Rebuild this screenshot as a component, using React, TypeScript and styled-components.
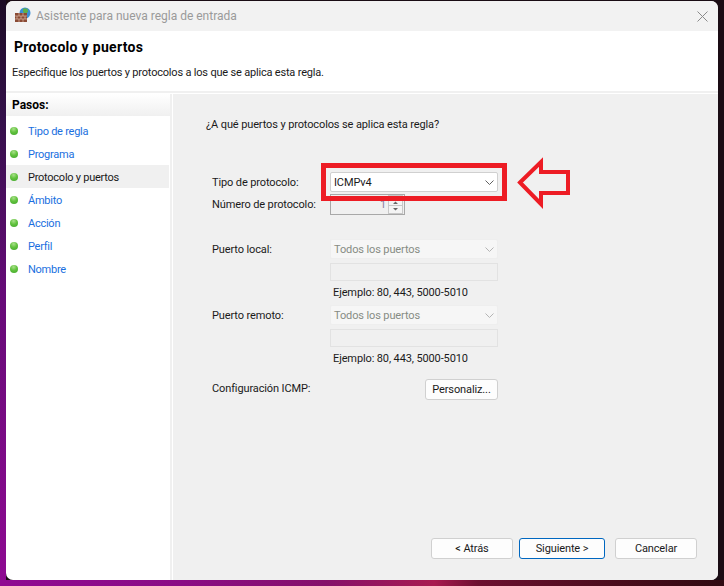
import React from "react";
import styled, { createGlobalStyle } from "styled-components";

const GlobalStyle = createGlobalStyle`
  html, body { margin: 0; padding: 0; width: 724px; height: 586px; overflow: hidden; }
  body { font-family: Roboto, "Liberation Sans", Arial, sans-serif; }
  * { box-sizing: border-box; }
`;

const steps = ["Tipo de regla", "Programa", "Protocolo y puertos", "Ámbito", "Acción", "Perfil", "Nombre"];

const Desktop = styled.div`
  width: 724px;
  height: 586px;
  padding: 1px 6px 6px;
  background:
    linear-gradient(90deg, #8f0a92 0, #8a0c85 25%, #85106a 45%, #a81a50 60%, #6c1030 66%, #4a0c1c 85%, #300a12 100%) bottom / 100% 6px no-repeat,
    linear-gradient(180deg, #1c0c24 0, #34104a 20%, #660b78 50%, #8f0a92 100%) left / 6px 100% no-repeat,
    #1a0c14;
`;

const Window = styled.div`
  width: 712px;
  height: 579px;
  display: flex;
  flex-direction: column;
  background: #fff;
  border-radius: 7px;
  overflow: hidden;
`;

const TitleBar = styled.div`
  height: 30px;
  flex: none;
  display: flex;
  align-items: center;
  padding: 0 8px 0 9px;
  background: #f2f2f2;
`;

const AppIcon = styled.svg`
  width: 16px;
  height: 16px;
  margin-bottom: 2px;
  flex: none;
`;

const TitleText = styled.span`
  margin-left: 5px;
  font-size: 12px;
  color: #9a9a9a;
`;

const CloseIcon = styled.svg`
  margin-left: auto;
  margin-right: 2px;
  width: 11px;
  height: 11px;
`;

const Header = styled.div`
  height: 62px;
  flex: none;
  padding: 8px 0 0 6px;
  border-bottom: 2px solid #f0f0f0;
`;

const HeaderTitle = styled.div`
  margin-left: 2px;
  font-size: 14px;
  font-weight: bold;
  letter-spacing: 0.3px;
  color: #000;
  line-height: 16px;
`;

const HeaderSub = styled.div`
  margin-top: 11px;
  font-size: 11px;
  letter-spacing: -0.19px;
  color: #1a1a1a;
  line-height: 14px;
`;

const Body = styled.div`
  flex: 1;
  display: flex;
  min-height: 0;
  padding-top: 1px;
`;

const Sidebar = styled.div`
  width: 166px;
  flex: none;
  border-right: 2px solid #f0f0f0;
`;

const SideTitle = styled.div`
  height: 22px;
  padding-left: 6px;
  font-size: 12px;
  font-weight: bold;
  line-height: 22px;
  color: #000;
  background: linear-gradient(180deg, #ffffff, #f0f0f0);
`;

const StepList = styled.div`
  padding-top: 3px;
`;

const Step = styled.div<{ $active?: boolean }>`
  height: 23px;
  margin-right: 1px;
  display: flex;
  align-items: center;
  padding-left: 4px;
  font-size: 11px;
  letter-spacing: -0.25px;
  color: ${(p) => (p.$active ? "#1a1a1a" : "#1a6fe0")};
  background: ${(p) => (p.$active ? "#f0f0f0" : "transparent")};
`;

const StepName = styled.span`
  padding-top: 2px;
`;

const Dot = styled.span`
  width: 8px;
  height: 8px;
  margin-right: 10px;
  border-radius: 50%;
  background: radial-gradient(circle at 45% 25%, #a8e08a 0, #62c23e 45%, #3fa52b 100%);
`;

const Main = styled.div`
  flex: 1;
  padding: 24px 0 21px 33px;
  margin-left: 1px;
  background: #f0f0f0;
  display: flex;
  flex-direction: column;
  font-size: 11px;
  letter-spacing: -0.12px;
  color: #1a1a1a;
`;

const Question = styled.div`
  height: 14px;
  line-height: 14px;
`;

const Form = styled.div`
  margin-top: 40px;
  margin-left: 6px;
  display: grid;
  grid-template-columns: 118px 168px;
`;

const Label = styled.div<{ $h: number; $top?: number }>`
  height: ${(p) => p.$h}px;
  line-height: ${(p) => p.$h + 1}px;
  margin-top: ${(p) => p.$top ?? 0}px;
`;

const Select = styled.div<{ $disabled?: boolean; $top?: number }>`
  height: 20px;
  margin-top: ${(p) => p.$top ?? 0}px;
  display: flex;
  align-items: center;
  justify-content: space-between;
  padding: 0 3px;
  border-radius: 2px;
  color: ${(p) => (p.$disabled ? "#868c84" : "#1a1a1a")};
  background: ${(p) => (p.$disabled ? "#f6f6f6" : "#fff")};
  border: 1px solid ${(p) => (p.$disabled ? "#eeeeee" : "#d0d0d0")};
`;

const Chevron = styled.svg<{ $disabled?: boolean }>`
  width: 9px;
  height: 5px;
  stroke: ${(p) => (p.$disabled ? "#b4b4b4" : "#606060")};
  fill: none;
`;

const Spin = styled.div`
  height: 21px;
  margin-top: 2px;
  display: flex;
  justify-content: flex-end;
  width: 75px;
  border: 1px solid #a8a8a8;
  color: #8c7ea0;
  line-height: 19px;
`;

const SpinBtns = styled.svg`
  width: 16px;
  height: 19px;
  margin-left: 2px;
  flex: none;
`;

const Input = styled.div`
  height: 18px;
  margin-top: 4px;
  background: #f0f0f0;
  border: 1px solid #e2e2e2;
`;

const Hint = styled.div`
  height: 24px;
  line-height: 24px;
  padding-left: 3px;
`;

const SmallButton = styled.div<{ $top?: number }>`
  justify-self: end;
  width: 73px;
  height: 21px;
  margin-top: ${(p) => p.$top ?? 0}px;
  text-align: center;
  line-height: 19px;
  background: #fdfdfd;
  border: 1px solid #d0d0d0;
  border-radius: 3px;
`;

const Footer = styled.div`
  margin-top: auto;
  display: flex;
  padding-left: 225px;
`;

const Button = styled.div<{ $primary?: boolean; $gap?: number }>`
  width: ${(p) => (p.$primary ? "86px" : "82px")};
  margin-left: ${(p) => p.$gap ?? 0}px;
  height: 21px;
  text-align: center;
  line-height: 19px;
  color: #1a1a1a;
  background: #fdfdfd;
  border: 1px solid ${(p) => (p.$primary ? "#0067c0" : "#d0d0d0")};
  border-radius: 3px;
`;

const Callout = styled.div`
  position: absolute;
  left: 321px;
  top: 163px;
  width: 186px;
  height: 38px;
  border: 5px solid #ed1c24;
`;

const Arrow = styled.svg`
  position: absolute;
  left: 515px;
  top: 155px;
  width: 58px;
  height: 55px;
`;

const ChevronIcon = ({ disabled }: { disabled?: boolean }) => (
  <Chevron $disabled={disabled} viewBox="0 0 9 5">
    <path d="M0.5 0.5 L4.5 4.5 L8.5 0.5" />
  </Chevron>
);

export default function App() {
  return (
    <Desktop>
      <GlobalStyle />
      <Window>
        <TitleBar>
          <AppIcon viewBox="0 0 16 16">
            <circle cx="10" cy="6" r="5.5" fill="#3b8fd6" />
            <path d="M8 1.5 L12.5 1.5 L13 5 L10 7 L8 5 Z" fill="#5fb04a" />
            <rect x="0" y="6" width="12" height="9" fill="#8a4a34" />
            <path d="M0 9H12M0 12H12M4 6V9M8 6V9M2 9V12M6 9V12M10 9V12M4 12V15M8 12V15" stroke="#d9b8a8" strokeWidth="0.7" />
          </AppIcon>
          <TitleText>Asistente para nueva regla de entrada</TitleText>
          <CloseIcon viewBox="0 0 11 11">
            <path d="M0.5 0.5 L10.5 10.5 M10.5 0.5 L0.5 10.5" stroke="#8a8a8a" strokeWidth="1" />
          </CloseIcon>
        </TitleBar>
        <Header>
          <HeaderTitle>Protocolo y puertos</HeaderTitle>
          <HeaderSub>Especifique los puertos y protocolos a los que se aplica esta regla.</HeaderSub>
        </Header>
        <Body>
          <Sidebar>
            <SideTitle>Pasos:</SideTitle>
            <StepList>
              {steps.map((s, i) => (
                <Step key={s} $active={i === 2}>
                  <Dot />
                  <StepName>{s}</StepName>
                </Step>
              ))}
            </StepList>
          </Sidebar>
          <Main>
            <Question>¿A qué puertos y protocolos se aplica esta regla?</Question>
            <Form>
              <Label $h={20}>Tipo de protocolo:</Label>
              <Select>
                ICMPv4
                <ChevronIcon />
              </Select>
              <Label $h={24}>Número de protocolo:</Label>
              <Spin>
                1
                <SpinBtns viewBox="0 0 16 19">
                  <rect x="0.5" y="0.5" width="14" height="10" fill="#f4f4f4" stroke="#c8c8c8" />
                  <rect x="0.5" y="10.5" width="14" height="8" fill="#f4f4f4" stroke="#c8c8c8" />
                  <path d="M5 9 L7.5 6.5 L10 9 Z M5 13 L7.5 15.5 L10 13 Z" fill="#666" />
                </SpinBtns>
              </Spin>
              <Label $h={20} $top={23}>Puerto local:</Label>
              <Select $disabled $top={23}>
                Todos los puertos
                <ChevronIcon disabled />
              </Select>
              <div />
              <Input />
              <div />
              <Hint>Ejemplo: 80, 443, 5000-5010</Hint>
              <Label $h={20}>Puerto remoto:</Label>
              <Select $disabled>
                Todos los puertos
                <ChevronIcon disabled />
              </Select>
              <div />
              <Input />
              <div />
              <Hint>Ejemplo: 80, 443, 5000-5010</Hint>
              <Label $h={18} $top={8}>Configuración ICMP:</Label>
              <SmallButton $top={8}>Personaliz...</SmallButton>
            </Form>
            <Footer>
              <Button>&lt; Atrás</Button>
              <Button $primary $gap={6}>Siguiente &gt;</Button>
              <Button $gap={10}>Cancelar</Button>
            </Footer>
          </Main>
        </Body>
      </Window>
      <Callout />
      <Arrow viewBox="0 0 58 55">
        <path d="M5 27.5 L26 7 L26 17 L53 17 L53 38 L26 38 L26 49 Z" fill="none" stroke="#ed1c24" strokeWidth="4" />
      </Arrow>
    </Desktop>
  );
}
